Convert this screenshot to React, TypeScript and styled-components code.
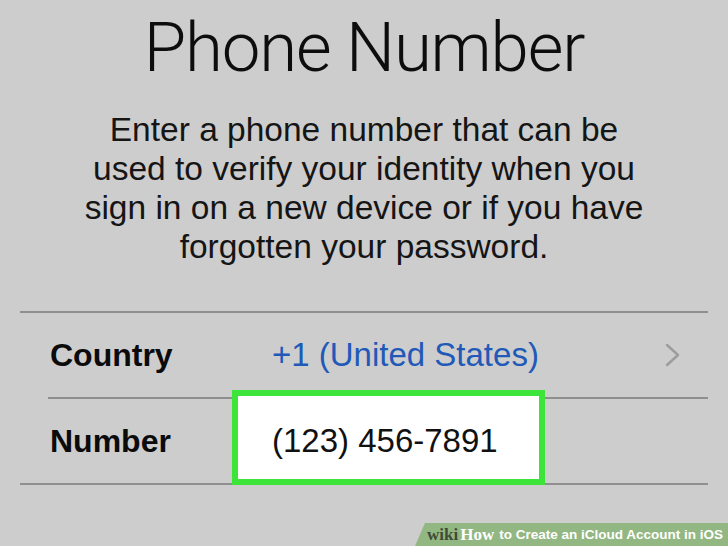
import React from "react"
import styled, { createGlobalStyle } from "styled-components"

const GlobalStyle = createGlobalStyle`
  html, body {
    margin: 0;
    padding: 0;
    background: #cdcdcd;
  }
`

const Page = styled.div`
  position: relative;
  width: 728px;
  height: 546px;
  overflow: hidden;
  background: #cdcdcd;
  font-family: "Liberation Sans", Arial, sans-serif;
  color: #111;
`

const Title = styled.h1`
  margin: 8px 0 0;
  font-family: Roboto, "Liberation Sans", sans-serif;
  font-weight: 300;
  font-size: 69px;
  line-height: 80px;
  letter-spacing: -1.2px;
  text-align: center;
  color: #0d0d0d;
`

const Intro = styled.p`
  margin: 22px 0 0;
  font-size: 33.5px;
  line-height: 39px;
  text-align: center;
  color: #151515;
`

const List = styled.div`
  margin: 45px 20px 0;
  border-top: 2px solid #8f8f8f;
  border-bottom: 2px solid #8f8f8f;
`

const Row = styled.div<{ $last?: boolean }>`
  display: grid;
  grid-template-columns: 222px 1fr 44px;
  align-items: center;
  height: 84px;
  margin-left: 28px;
  padding-left: 2px;
  border-bottom: ${(p) => (p.$last ? "none" : "2px solid #8f8f8f")};
`

const Label = styled.span`
  font-size: 32px;
  font-weight: 700;
  color: #0b0b0b;
`

const Value = styled.span<{ $link?: boolean }>`
  position: relative;
  display: flex;
  align-items: center;
  align-self: stretch;
  font-size: 33px;
  color: ${(p) => (p.$link ? "#2159b8" : "#111")};
`

const ValueText = styled.span`
  position: relative;
  z-index: 1;
`

const Highlight = styled.span`
  position: absolute;
  left: -40px;
  top: -9px;
  bottom: -2px;
  width: 313px;
  box-sizing: border-box;
  background: #ffffff;
  border: 6px solid #3de43a;
`

const Chevron = styled.svg`
  width: 16px;
  height: 24px;
  justify-self: start;
`

const Banner = styled.div`
  position: absolute;
  right: 0;
  bottom: 0;
  width: 313px;
  height: 23px;
  display: flex;
  align-items: center;
  padding-left: 12px;
  box-sizing: border-box;
  background: #93b782;
  clip-path: polygon(10px 0, 100% 0, 100% 100%, 0 100%);
  white-space: nowrap;
`

const Wiki = styled.span`
  font-family: "Liberation Serif", serif;
  font-weight: 700;
  font-size: 17px;
  color: #3f4c38;
`

const How = styled.span`
  margin-left: 2px;
  font-family: "Liberation Serif", serif;
  font-weight: 700;
  font-size: 17px;
  color: #ffffff;
`

const BannerText = styled.span`
  margin-left: 5px;
  font-size: 13.5px;
  font-weight: 700;
  color: #ffffff;
`

export default function App() {
  return (
    <Page>
      <GlobalStyle />
      <Title>Phone Number</Title>
      <Intro>
        Enter a phone number that can be
        <br />
        used to verify your identity when you
        <br />
        sign in on a new device or if you have
        <br />
        forgotten your password.
      </Intro>
      <List>
        <Row>
          <Label>Country</Label>
          <Value $link>
            <ValueText>+1 (United States)</ValueText>
          </Value>
          <Chevron viewBox="0 0 16 24">
            <polyline
              points="3,2 14,12 3,22"
              fill="none"
              stroke="#9c9c9c"
              strokeWidth="2.4"
              strokeLinecap="round"
              strokeLinejoin="round"
            />
          </Chevron>
        </Row>
        <Row $last>
          <Label>Number</Label>
          <Value>
            <Highlight />
            <ValueText>(123) 456-7891</ValueText>
          </Value>
          <span />
        </Row>
      </List>
      <Banner>
        <Wiki>wiki</Wiki>
        <How>How</How>
        <BannerText>to Create an iCloud Account in iOS</BannerText>
      </Banner>
    </Page>
  )
}
